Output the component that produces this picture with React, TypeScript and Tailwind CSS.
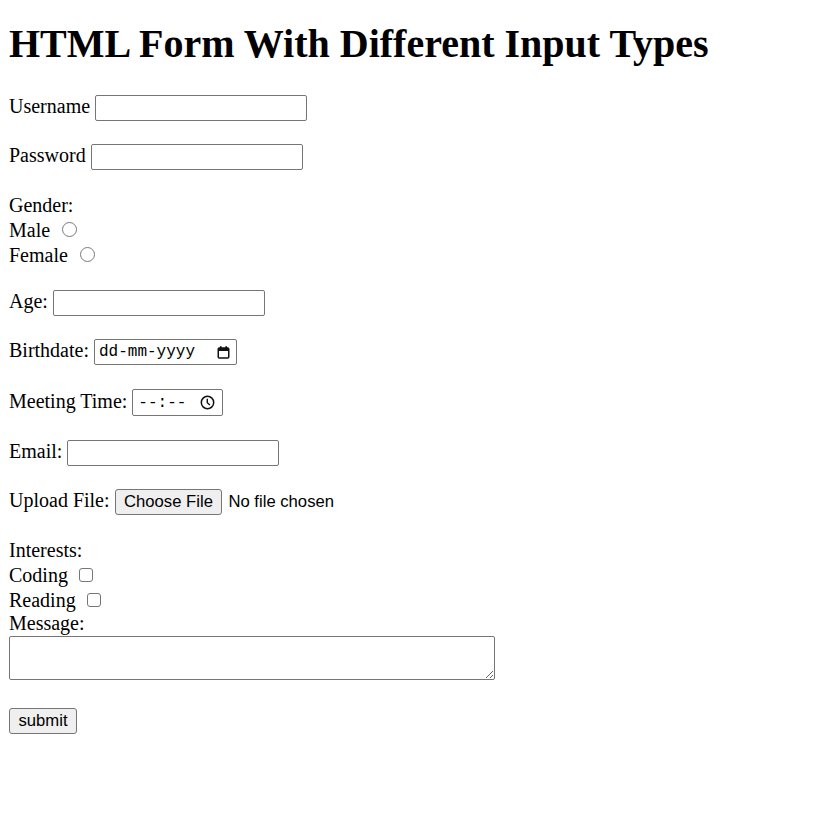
import React from "react";

const field =
  "h-[26px] w-[212px] rounded-[2px] border border-[#767676] bg-white px-[3px] font-['Liberation_Sans',Arial,sans-serif] text-[16.67px] outline-none";

const btn =
  "h-[26px] rounded-[3px] border border-[#767676] bg-[#efefef] px-[8.5px] font-['Liberation_Sans',Arial,sans-serif] text-[16.67px] leading-[20px] text-black";

function CalendarIcon() {
  return (
    <svg width="15" height="15" viewBox="0 0 15 15" fill="none">
      <rect x="2.25" y="3" width="10.5" height="10" rx="1" stroke="#111" strokeWidth="1.5" />
      <rect x="2.25" y="3" width="10.5" height="3" fill="#111" />
      <rect x="4" y="1.2" width="1.6" height="2.5" fill="#111" />
      <rect x="9.4" y="1.2" width="1.6" height="2.5" fill="#111" />
    </svg>
  );
}

function ClockIcon() {
  return (
    <svg width="15" height="15" viewBox="0 0 15 15" fill="none">
      <circle cx="7.5" cy="7.5" r="6.2" stroke="#111" strokeWidth="1.5" />
      <path d="M7.3 3.8V7.7L9.9 10" stroke="#111" strokeWidth="1.4" />
    </svg>
  );
}

export default function App() {
  return (
    <div className="min-h-[817px] bg-white px-[9px] font-['Liberation_Serif','Times_New_Roman',serif] text-[20px] text-black">
      <h1 className="pt-[21px] text-[40px] font-bold leading-[46px]">
        HTML Form With Different Input Types
      </h1>

      <form className="flex flex-col items-start" onSubmit={(e) => e.preventDefault()}>
        {/* text fields */}
        <div className="mt-[28px] flex items-start">
          <label className="leading-[23px]">Username</label>
          <input type="text" className={`${field} ml-[5px]`} />
        </div>

        <div className="mt-[23px] flex items-start">
          <label className="leading-[23px]">Password</label>
          <input type="password" className={`${field} ml-[5px]`} />
        </div>

        {/* gender */}
        <div className="mt-[23.5px] leading-[23px]">Gender:</div>
        <div className="flex h-[25px] items-start pt-[2px]">
          <label className="leading-[23px]">Male</label>
          <input
            type="radio"
            name="gender"
            className="ml-[12px] mt-[3.5px] h-[15px] w-[15px] appearance-none rounded-full border border-[#7a7a7a] bg-white"
          />
        </div>
        <div className="flex h-[25px] items-start pt-[2px]">
          <label className="leading-[23px]">Female</label>
          <input
            type="radio"
            name="gender"
            className="ml-[12px] mt-[3px] h-[15px] w-[15px] appearance-none rounded-full border border-[#7a7a7a] bg-white"
          />
        </div>

        <div className="mt-[23.5px] flex items-start">
          <label className="leading-[23px]">Age:</label>
          <input type="text" inputMode="numeric" className={`${field} ml-[5px]`} />
        </div>

        {/* date */}
        <div className="mt-[23px] flex items-start">
          <label className="leading-[23px]">Birthdate:</label>
          <div className="ml-[5px] flex h-[26px] w-[143px] items-center justify-between rounded-[2px] border border-[#767676] bg-white pl-[4px] pr-[5px]">
            <span className="font-['Liberation_Mono','DejaVu_Sans_Mono',monospace] text-[16px] leading-[20px]">
              dd-mm-yyyy
            </span>
            <CalendarIcon />
          </div>
        </div>

        {/* time */}
        <div className="mt-[24px] flex items-start">
          <label className="pt-[0.5px] leading-[23px]">Meeting Time:</label>
          <div className="ml-[5px] flex h-[27px] w-[91px] items-center justify-between rounded-[2px] border border-[#767676] bg-white pl-[5px] pr-[7px]">
            <span className="font-['Liberation_Mono','DejaVu_Sans_Mono',monospace] text-[16px] leading-[20px]">
              --:--
            </span>
            <ClockIcon />
          </div>
        </div>

        <div className="mt-[24px] flex items-start">
          <label className="leading-[23px]">Email:</label>
          <input type="email" className={`${field} ml-[5px]`} />
        </div>

        {/* file */}
        <div className="mt-[23px] flex items-start">
          <label className="leading-[23px]">Upload File:</label>
          <button type="button" className={`${btn} ml-[5px]`}>
            Choose File
          </button>
          <span className="ml-[6px] font-['Liberation_Sans',Arial,sans-serif] text-[16.67px] leading-[26px]">
            No file chosen
          </span>
        </div>

        {/* interests */}
        <div className="mt-[23.5px] leading-[23px]">Interests:</div>
        <div className="flex h-[25px] items-start pt-[2px]">
          <label className="leading-[23px]">Coding</label>
          <input
            type="checkbox"
            className="ml-[11px] mt-[4px] h-[14px] w-[14px] appearance-none rounded-[3px] border border-[#767676] bg-white"
          />
        </div>
        <div className="flex h-[25px] items-start pt-[2px]">
          <label className="leading-[23px]">Reading</label>
          <input
            type="checkbox"
            className="ml-[11px] mt-[4px] h-[14px] w-[14px] appearance-none rounded-[3px] border border-[#767676] bg-white"
          />
        </div>

        <div className="leading-[23px]">Message:</div>
        <textarea className="mt-[1px] h-[44px] w-[486px] resize rounded-[2px] border border-[#767676] bg-white outline-none" />

        <button type="submit" className={`${btn} mt-[28px] h-[25px]`}>
          submit
        </button>
      </form>
    </div>
  );
}
